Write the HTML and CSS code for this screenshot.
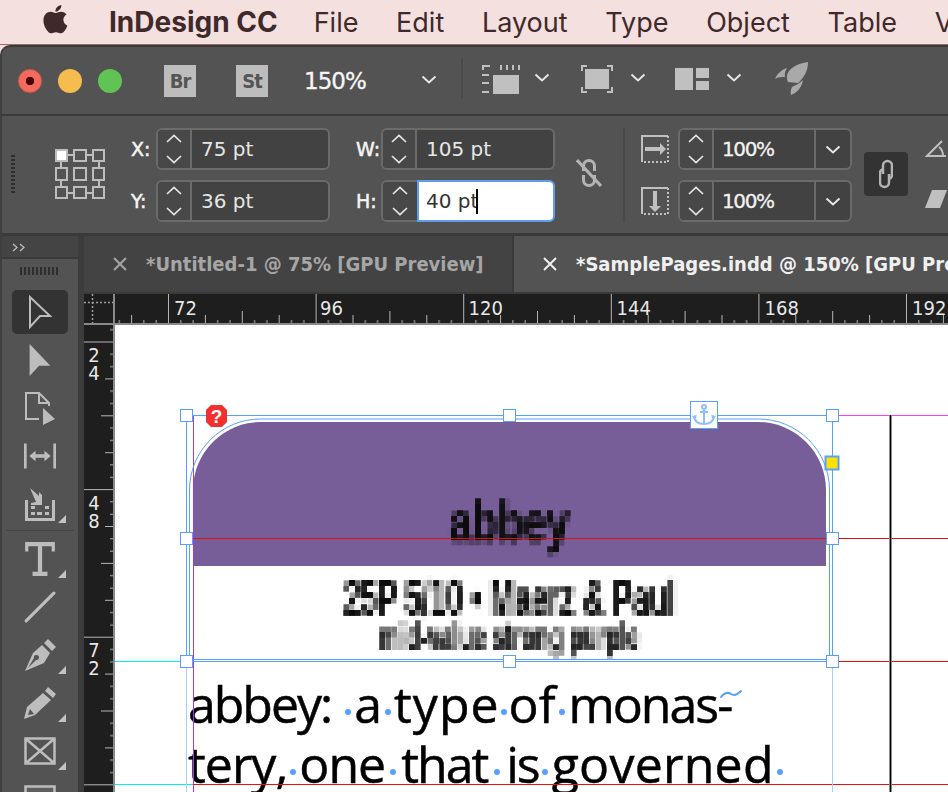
FILE: index.html
```html
<!DOCTYPE html>
<html lang="en">
<head>
<meta charset="utf-8">
<title>InDesign CC</title>
<link rel="stylesheet" href="styles.css">
</head>
<body>
<svg class="defs" aria-hidden="true">
  <defs>
    <filter id="pix" x="0" y="0" width="100%" height="100%" color-interpolation-filters="sRGB">
      <feGaussianBlur in="SourceGraphic" stdDeviation="0.9" result="soft"/>
      <feFlood x="2" y="2" width="2" height="2" flood-color="#000"/>
      <feComposite width="6" height="6"/>
      <feTile result="grid"/>
      <feComposite in="soft" in2="grid" operator="in"/>
      <feMorphology operator="dilate" radius="2"/>
    </filter>
    <symbol id="chev" viewBox="0 0 16 9"><path d="M1.5 1.5 8 7.5l6.5-6" fill="none" stroke="currentColor" stroke-width="2"/></symbol>
    <symbol id="spin" viewBox="0 0 16 30"><path d="M1 8 8 1.5 15 8M1 22l7 6.5 7-6.500" fill="none" stroke="currentColor" stroke-width="1.7"/></symbol>
    <symbol id="corner" viewBox="0 0 8 8"><path d="M8 0v8H0z" fill="#c4c4c4"/></symbol>
    <symbol id="closex" viewBox="0 0 14 14"><path d="M1 1l12 12M13 1 1 13" fill="none" stroke="currentColor" stroke-width="2"/></symbol>
  </defs>
</svg>

<div class="menubar">
  <svg class="apple" viewBox="3.5 3 16.5 18.5"><path d="M17.05 20.28c-.98.95-2.05.8-3.08.35-1.09-.46-2.09-.48-3.24 0-1.44.62-2.2.44-3.06-.35C2.79 15.25 3.51 7.59 9.05 7.31c1.35.07 2.29.74 3.08.8 1.18-.24 2.31-.93 3.57-.84 1.51.12 2.65.72 3.4 1.8-3.12 1.87-2.38 5.98.48 7.13-.57 1.5-1.31 2.99-2.54 4.09zM12.03 7.25c-.15-2.23 1.66-4.07 3.74-4.25.29 2.58-2.34 4.5-3.74 4.25z"/></svg>
  <span class="menu-app">InDesign CC</span>
  <span class="menu-item">File</span>
  <span class="menu-item">Edit</span>
  <span class="menu-item">Layout</span>
  <span class="menu-item">Type</span>
  <span class="menu-item">Object</span>
  <span class="menu-item">Table</span>
  <span class="menu-item">View</span>
</div>

<div class="window">
  <div class="titlebar">
    <span class="light light-red"></span>
    <span class="light light-yellow"></span>
    <span class="light light-green"></span>
    <span class="appbadge badge-br">Br</span>
    <span class="appbadge badge-st">St</span>
    <span class="zoomval">150%</span>
    <svg class="chev chev-zoom"><use href="#chev"/></svg>
    <span class="tdiv"></span>
    <svg class="ticon icon-layout" viewBox="0 0 38 30"><path fill="#c0c0c0" d="M11 11h26v19H11z"/><path fill="none" stroke="#c0c0c0" stroke-width="2" d="M0 2h8M1 1v5M19 1v5M25 1v5M31 1v5M37 1v5M0 11h7M0 19h7M0 28h7"/></svg>
    <svg class="chev chev-a"><use href="#chev"/></svg>
    <svg class="ticon icon-frame" viewBox="0 0 32 28"><path fill="#c0c0c0" d="M4 4h24v20H4z"/><path fill="none" stroke="#c0c0c0" stroke-width="2" d="M1 6V1h5M26 1h5v5M31 22v5h-5M6 27H1v-5"/></svg>
    <svg class="chev chev-b"><use href="#chev"/></svg>
    <svg class="ticon icon-arrange" viewBox="0 0 34 22"><path fill="#c0c0c0" d="M0 0h18v22H0zM21 0h13v10H21zM21 13h13v9H21z"/></svg>
    <svg class="chev chev-c"><use href="#chev"/></svg>
    <svg class="ticon icon-rocket" viewBox="0 0 34 34"><path fill="#a9a9a9" d="M33 0C25 1 18 4 14 9c-2 3-3 7-1 11l10 1c7-6 10-13 10-21zM12 6C6 8 2 12 0 17c3-2 6-2 10-2-.5-3 0-6 2-9zM28 18c-3 3-7 5-11 7-1.500 3-1.500 6-1 8 6-2 11-8 12-15z"/></svg>
  </div>

  <div class="controlbar">
    <span class="gripper"></span>
    <svg class="refgrid" viewBox="0 0 50 50">
      <path fill="none" stroke="#bdbdbd" stroke-width="2" d="M13 6h5M32 6h5M13 44h5M32 44h5M6 13v5M44 13v5M6 32v5M44 32v5"/>
      <path fill="none" stroke="#bdbdbd" stroke-width="2" d="M19 1h12v11H19zM38 1h11v11H38zM1 19h11v12H1zM19 19h12v12H19zM38 19h11v12H38zM1 38h11v11H1zM19 38h12v11H19zM38 38h11v11H38z"/>
      <path fill="#fff" stroke="#bdbdbd" stroke-width="2" d="M1 1h11v11H1z"/>
    </svg>
    <div class="xy xy-pos">
      <span class="flabel">X:</span>
      <div class="field"><span class="spinner"><svg class="spin"><use href="#spin"/></svg></span><span class="fval">75 pt</span></div>
      <span class="flabel">Y:</span>
      <div class="field"><span class="spinner"><svg class="spin"><use href="#spin"/></svg></span><span class="fval">36 pt</span></div>
    </div>
    <div class="xy xy-size">
      <span class="flabel">W:</span>
      <div class="field"><span class="spinner"><svg class="spin"><use href="#spin"/></svg></span><span class="fval">105 pt</span></div>
      <span class="flabel">H:</span>
      <div class="field field-focus"><span class="spinner"><svg class="spin"><use href="#spin"/></svg></span><span class="focusbox"><span class="fval">40 pt</span><span class="caret"></span></span></div>
    </div>
    <svg class="unlink" viewBox="0 0 26 30"><path fill="none" stroke="#b4b4b4" stroke-width="3" d="M7.500 13V8a5.500 5.500 0 0 1 11 0v5M18.500 17v5a5.500 5.500 0 0 1-11 0v-5"/><path stroke="#b4b4b4" stroke-width="3" d="M1 2l24 26"/></svg>
    <span class="cdiv"></span>
    <div class="scale">
      <svg class="sicon" viewBox="0 0 28 28"><path fill="none" stroke="#c0c0c0" stroke-width="2" d="M1 27V1h26"/><path fill="none" stroke="#c0c0c0" stroke-width="2" stroke-dasharray="2 2" d="M27 1v26H1"/><path fill="#c0c0c0" d="M4 12h15V8l6 6-6 6v-4H4z"/></svg>
      <div class="field field-scale"><span class="spinner"><svg class="spin"><use href="#spin"/></svg></span><span class="fval fval-pct">100%</span><span class="dropbtn"><svg class="chev"><use href="#chev"/></svg></span></div>
      <svg class="sicon" viewBox="0 0 28 28"><path fill="none" stroke="#c0c0c0" stroke-width="2" d="M1 27V1h26"/><path fill="none" stroke="#c0c0c0" stroke-width="2" stroke-dasharray="2 2" d="M27 1v26H1"/><path fill="#c0c0c0" d="M12 4h4v15h4l-6 6-6-6h4z"/></svg>
      <div class="field field-scale"><span class="spinner"><svg class="spin"><use href="#spin"/></svg></span><span class="fval fval-pct">100%</span><span class="dropbtn"><svg class="chev"><use href="#chev"/></svg></span></div>
    </div>
    <span class="linkbtn"><svg viewBox="0 0 14 30"><path fill="none" stroke="#b4b4b4" stroke-width="2.500" d="M4 15V6.500a4.500 4.500 0 0 1 9 0V16a4 4 0 0 1-4 4M10 15v8.500a4.500 4.500 0 0 1-9 0V14a4 4 0 0 1 4-4"/></svg></span>
    <div class="shear">
      <svg viewBox="0 0 22 18"><path fill="none" stroke="#c0c0c0" stroke-width="2" d="M21 17H2L17 2M14 8c3 2 4 5 4 9"/></svg>
      <svg viewBox="0 0 22 18"><path fill="#c0c0c0" d="M7 0h15l-7 18H0z"/></svg>
    </div>
  </div>

  <div class="workspace">
    <aside class="toolbar">
      <div class="tb-head"><svg viewBox="0 0 14 9"><path fill="none" stroke="#bdbdbd" stroke-width="1.3" d="M1 1l4 3.5L1 8M8 1l4 3.5L8 8"/></svg></div>
      <div class="tb-grip"></div>
      <div class="tool tool-active"><span class="tool-hl"><svg viewBox="0 0 26 36"><path fill="none" stroke="#bdbdbd" stroke-width="2" d="M3 3v30l10-11h10z"/></svg></span></div>
      <div class="tool"><svg viewBox="0 0 26 36"><path fill="#bdbdbd" d="M2 1v34l10-11h12z"/></svg></div>
      <div class="tool"><svg viewBox="0 0 32 34"><path fill="none" stroke="#bdbdbd" stroke-width="2" d="M15 28H2V2h13l10 10v3M15 2v10h10"/><path fill="#bdbdbd" d="M19 17l12 11-12 6z"/></svg></div>
      <div class="tool"><svg viewBox="0 0 36 28"><path fill="#bdbdbd" d="M0 0h3v28H0zM33 0h3v28h-3zM6 14l7-6v4h10V8l7 6-7 6v-4H13v4z"/></svg></div>
      <div class="tool has-corner"><svg viewBox="0 0 30 34"><path fill="#bdbdbd" d="M5 1l9 8V5l3 3v10H6v-2l5-1z"/><path fill="none" stroke="#bdbdbd" stroke-width="3" d="M1.500 13v19.500h27V13"/><path fill="#bdbdbd" d="M6 19h4v3H6zM12 25h5v3h-5zM6 25h4v3H6zM20 25h4v3h-4zM20 19h4v3h-4z"/></svg><svg class="corner"><use href="#corner"/></svg></div>
      <div class="tb-sep"></div>
      <div class="tool has-corner"><svg viewBox="0 0 28 32"><path fill="#bdbdbd" d="M0 0h28v9h-3V4H16v24h5v4H7v-4h5V4H3v5H0z"/></svg><svg class="corner"><use href="#corner"/></svg></div>
      <div class="tool"><svg viewBox="0 0 30 30"><path stroke="#bdbdbd" stroke-width="3" stroke-linecap="round" d="M2 28 28 2"/></svg></div>
      <div class="tool has-corner"><svg viewBox="0 0 32 32"><path fill="#bdbdbd" d="M24 0l8 8-4 4-8-8zM18 6l8 8-6 10L1 32l8-18zM4 29l8-8a2.500 2.500 0 1 0-2-2z"/></svg><svg class="corner"><use href="#corner"/></svg></div>
      <div class="tool has-corner"><svg viewBox="0 0 32 32"><path fill="#bdbdbd" d="M24 0l8 7-3 4-8-7zM19 6l8 7-16 15-11 4 3-12zM4 28l6-1-4-5z"/></svg><svg class="corner"><use href="#corner"/></svg></div>
      <div class="tool has-corner"><svg viewBox="0 0 32 28"><path fill="none" stroke="#bdbdbd" stroke-width="2.500" d="M1.500 1.500h29v25h-29zM1.500 1.500l29 25M30.500 1.500l-29 25"/></svg><svg class="corner"><use href="#corner"/></svg></div>
      <div class="tool"><svg viewBox="0 0 32 28"><path fill="#5f5f5f" stroke="#bdbdbd" stroke-width="2.500" d="M1.500 1.500h29v25h-29z"/></svg></div>
    </aside>

    <div class="docarea">
      <div class="tabs">
        <div class="tab tab-idle"><svg class="tabx"><use href="#closex"/></svg><span>*Untitled-1 @ 75% [GPU Preview]</span></div>
        <div class="tab tab-active"><svg class="tabx"><use href="#closex"/></svg><span>*SamplePages.indd @ 150% [GPU Preview]</span></div>
      </div>
      <div class="rulerrow">
        <svg class="corner-box" viewBox="0 0 29 29"><path fill="none" stroke="#a0a0a0" stroke-width="1.500" stroke-dasharray="2 2" d="M8.500 0v29M0 8.500h29"/></svg>
        <svg class="hruler" viewBox="115 0 833 29">
          <defs>
            <pattern id="hticks" x="168" y="0" width="147.6" height="29" patternUnits="userSpaceOnUse">
              <path stroke="#b5b5b5" fill="none" d="M.5 0v29M12.800 26v3M25.100 26v3M37.400 21v8M49.700 26v3M62 26v3M74.300 17v12M86.600 26v3M98.900 26v3M111.200 21v8M123.500 26v3M135.800 26v3"/>
            </pattern>
          </defs>
          <rect x="115" width="833" height="29" fill="url(#hticks)"/>
          <g class="rtext">
            <text x="174" y="20.500">72</text><text x="320" y="20.500">96</text><text x="468.500" y="20.500">120</text>
            <text x="616.500" y="20.500">144</text><text x="764.500" y="20.500">168</text><text x="912" y="20.500">192</text>
          </g>
        </svg>
      </div>
      <div class="pagerow">
        <svg class="vruler" viewBox="0 325 29 467">
          <defs>
            <pattern id="vticks" x="0" y="341.500" width="29" height="147.6" patternUnits="userSpaceOnUse">
              <path stroke="#b5b5b5" fill="none" d="M0 .5h29M26 12.800h3M26 25.100h3M21 37.400h8M26 49.700h3M26 62h3M17 74.300h12M26 86.600h3M26 98.900h3M21 111.200h8M26 123.500h3M26 135.800h3"/>
            </pattern>
          </defs>
          <rect y="325" width="29" height="467" fill="url(#vticks)"/>
          <g class="rtext rtext-v">
            <text x="10" y="362">2</text><text x="10" y="380">4</text>
            <text x="10" y="510">4</text><text x="10" y="528">8</text>
            <text x="10" y="657">7</text><text x="10" y="675">2</text>
          </g>
        </svg>
        <div class="canvas">
          <div class="swatch">
            <div class="swatch-head"><div class="px-name"><span>abbey</span></div></div>
            <div class="px-l1"><span>25P 5/10 • Maerz &amp; Paul</span></div>
            <div class="px-l2"><span>mid-value strong purple</span></div>
          </div>
          <div class="bodytext">
            <div class="bline"><span class="ls-2">abbey:</span><i class="sp g23"></i><span>a</span><i class="sp g12"></i><span class="ls1">type</span><i class="sp g9"></i><span>of</span><i class="sp g13"></i><span class="ls-2">monas-</span></div>
            <div class="bline"><span class="ls-1">tery,</span><i class="sp g12"></i><span class="ls-1">one</span><i class="sp g16"></i><span class="ls-2">that</span><i class="sp g19"></i><span class="ls-2">is</span><i class="sp g13"></i><span class="ls-f">governed</span><i class="sp g12"></i></div>
          </div>
          <svg class="overlay" viewBox="115 325 833 467">
            <g fill="none">
              <path stroke="#00f0f0" d="M115 661.500h71M115 784.500h78"/>
              <path stroke="#ff3df0" d="M838 415.500h110"/>
              <path stroke="#9b3fe0" d="M193.500 415v377"/>
              <path stroke="#e01010" stroke-width="1" d="M193 538.500h755"/>
              <path stroke="#ee1010" d="M838 661.500h110M193 784.500h755"/>
              <path stroke="#8c8c8c" stroke-width="3" d="M890.500 415v377"/>
              <path stroke="#000" d="M890.500 415v377"/>
              <path stroke="#a8cdfb" d="M832.500 667v125M186.500 667v125"/>
              <path stroke="#57a0ff" d="M186.500 415v250M832.500 415v246M187 415.500h645M187 661.500h645"/>
              <path stroke="#57a0ff" d="M189.500 658V490a71 71 0 0 1 71-71h498a71 71 0 0 1 71 71v168M190 659.500h639"/>
              <path stroke="#57a0ff" stroke-width="2" stroke-linecap="round" d="M721 697c4-5 7-5 10-3 3 2 6 1 10-3"/>
            </g>
            <g class="handles">
              <rect x="180.500" y="409.500" width="12" height="12"/><rect x="503.500" y="409.500" width="12" height="12"/><rect x="826.500" y="409.500" width="12" height="12"/>
              <rect x="180.500" y="532.500" width="12" height="12"/><rect x="826.500" y="532.500" width="12" height="12"/>
              <rect x="180.500" y="655.500" width="12" height="12"/><rect x="503.500" y="655.500" width="12" height="12"/><rect x="826.500" y="655.500" width="12" height="12"/>
            </g>
            <rect x="825.500" y="456.500" width="13" height="13" fill="#ffe100" stroke="#57a0ff" stroke-width="2"/>
            <rect x="690.500" y="401.500" width="27" height="27" fill="#fff" stroke="#57a0ff"/>
            <g fill="none" stroke="#8fc0fb" stroke-width="2">
              <circle cx="704" cy="407" r="2"/>
              <path d="M704 409v15M700 412h8M694 417c1 5 5 7 10 7s9-2 10-7" />
            </g>
            <path fill="#8fc0fb" d="M692 416l5-1-2 5zM716 416l-5-1 2 5z"/>
            <g>
              <path fill="#f23030" d="M211 405h11l5 5v12l-5 5h-11l-5-5v-12z"/>
              <text class="warn" x="216.500" y="423">?</text>
            </g>
          </svg>
        </div>
      </div>
    </div>
  </div>
</div>
</body>
</html>
```

FILE: styles.css
```css
* { box-sizing: border-box; }
html, body { margin: 0; padding: 0; }
body {
  width: 948px;
  height: 792px;
  overflow: hidden;
  background: #f4e0df;
  font-family: "DejaVu Sans", sans-serif;
  display: flex;
  flex-direction: column;
}
.defs { position: absolute; width: 0; height: 0; }

/* menu bar */
.menubar {
  height: 45px;
  flex: none;
  display: flex;
  align-items: center;
  background: #f4e0df;
  border-bottom: 1px solid #9a6a68;
  color: #40292b;
  font-family: "Inter", "Liberation Sans", sans-serif;
  font-size: 27px;
  white-space: nowrap;
  padding-left: 42px;
}
.apple { width: 26px; height: 31px; fill: #40292b; margin-right: 41px; margin-top: -6px; flex: none; }
.menu-app { font-weight: 700; font-size: 28px; margin-right: 36px; }
.menu-item { margin-right: 37.7px; }

/* window */
.window {
  flex: 1;
  min-height: 0;
  display: flex;
  flex-direction: column;
  background: #535353;
  border-top: 2px solid #3a3a3a;
  border-left: 2px solid #3f3f3f;
  border-top-left-radius: 10px;
  overflow: hidden;
}
.titlebar {
  height: 69px;
  flex: none;
  display: flex;
  align-items: center;
  padding-left: 16px;
  border-bottom: 2px solid #3a3a3a;
}
.light { width: 24px; height: 24px; border-radius: 50%; margin-right: 16px; flex: none; }
.light-red { background: radial-gradient(circle, #4a0404 0 4px, #f26b5e 4.500px); border: 1px solid #d8534a; }
.light-yellow { background: #f6bc4e; }
.light-green { background: #5fc454; margin-right: 42px; }
.appbadge {
  width: 32px; height: 32px; flex: none;
  background: #bdbdbd; color: #555;
  font-size: 20px; font-weight: 700; letter-spacing: -1px;
  font-family: "DejaVu Sans Condensed", "DejaVu Sans", sans-serif;
  display: flex; align-items: center; justify-content: center;
}
.badge-br { margin-right: 40px; }
.badge-st { margin-right: 36px; }
.zoomval { color: #f6f6f6; font-size: 23px; letter-spacing: -1px; -webkit-text-stroke: .3px #f6f6f6; width: 117px; flex: none; }
.chev { width: 16px; height: 9px; color: #e6e6e6; display: block; flex: none; }
.chev-zoom { margin-right: 24px; margin-top: -2px; }
.tdiv { width: 2px; height: 40px; background: #4a4a4a; margin-right: 19px; margin-top: -6px; flex: none; }
.ticon { flex: none; display: block; margin-top: -4px; }
.icon-layout { width: 38px; height: 30px; margin-right: 14px; }
.chev-a { margin-right: 31px; margin-top: -6px; }
.chev-b { margin-right: 29px; margin-top: -6px; }
.chev-c { margin-right: 33px; margin-top: -6px; }
.icon-frame { width: 32px; height: 28px; margin-right: 17px; }
.icon-arrange { width: 34px; height: 22px; margin-right: 17px; }
.icon-rocket { width: 34px; height: 34px; }

/* control panel */
.controlbar {
  height: 120px;
  flex: none;
  display: flex;
  align-items: flex-start;
  padding: 12px 0 0 9px;
  border-bottom: 3px solid #3a3a3a;
  white-space: nowrap;
}
.gripper {
  width: 4px; height: 40px; flex: none;
  margin: 27px 40px 0 0;
  background: repeating-linear-gradient(#2e2e2e 0 2px, transparent 2px 4px);
}
.refgrid { width: 50px; height: 50px; flex: none; margin: 21px 26px 0 0; }
.xy { display: grid; grid-template-columns: 25px 174px; row-gap: 10px; align-items: center; flex: none; }
.xy-pos { margin-right: 26px; }
.flabel { color: #f4f4f4; font-size: 19px; -webkit-text-stroke: .5px #f4f4f4; }
.field {
  height: 42px;
  display: flex;
  align-items: center;
  border: 2px solid #6b6b6b;
  border-radius: 6px;
  background: #424242;
  color: #e6e6e6;
  font-size: 20px;
}
.spinner {
  width: 34px; height: 100%; flex: none;
  background: #484848;
  border-right: 2px solid #6b6b6b;
  display: flex; align-items: center; justify-content: center;
  border-radius: 4px 0 0 4px;
}
.spin { width: 16px; height: 30px; color: #e6e6e6; display: block; }
.fval { padding-left: 9px; }
.field-focus .spinner { border-right: 0; }
.focusbox {
  flex: 1;
  align-self: stretch;
  margin: -2px -2px -2px 0;
  display: flex;
  align-items: center;
  background: #fff;
  border: 2px solid #5f9fe8;
  border-radius: 0 6px 6px 0;
  color: #333;
}
.focusbox .fval { padding-left: 7px; }
.caret { width: 2px; height: 25px; background: #000; margin-left: -2px; flex: none; }
.unlink { width: 26px; height: 30px; flex: none; margin: 30px 21px 0 21px; }
.cdiv { width: 2px; height: 94px; background: #4a4a4a; flex: none; }
.scale {
  display: grid;
  grid-template-columns: 28px 174px;
  column-gap: 9px;
  row-gap: 10px;
  align-items: center;
  margin-left: 16px;
  flex: none;
}
.sicon { width: 28px; height: 28px; display: block; }
.field-scale .fval { flex: 1; letter-spacing: -1.4px; padding-left: 8px; color: #f2f2f2; -webkit-text-stroke: .3px #f2f2f2; }
.dropbtn {
  width: 36px; height: 100%; flex: none;
  border-left: 2px solid #6b6b6b;
  display: flex; align-items: center; justify-content: center;
}
.linkbtn {
  width: 44px; height: 44px; flex: none;
  margin: 24px 0 0 12px;
  background: #333;
  border-radius: 4px;
  display: flex; align-items: center; justify-content: center;
}
.linkbtn svg { width: 14px; height: 30px; }
.shear { flex: none; margin: 11px 0 0 17px; display: flex; flex-direction: column; gap: 33px; }
.shear svg { width: 22px; height: 18px; display: block; }

/* workspace */
.workspace { flex: 1; min-height: 0; display: flex; background: #3c3c3c; }
.toolbar {
  width: 76px;
  flex: none;
  margin-right: 6px;
  background: #535353;
  display: flex;
  flex-direction: column;
  align-items: stretch;
}
.tb-head { height: 23px; flex: none; background: #444; border-bottom: 2px solid #3a3a3a; padding: 7px 0 0 10px; }
.tb-head svg { width: 14px; height: 9px; display: block; }
.tb-grip {
  height: 8px; margin: 8px 19px 0 18px; flex: none;
  background: repeating-linear-gradient(90deg, #2e2e2e 0 2px, transparent 2px 4px);
}
.tool { height: 48px; flex: none; display: flex; align-items: center; justify-content: center; position: relative; }
.tb-grip + .tool { margin-top: 13px; }
.tool > svg:first-child { width: 32px; height: 34px; }
.tool-hl {
  width: 56px; height: 44px;
  background: #333;
  border-radius: 5px;
  display: flex; align-items: center; justify-content: center;
}
.tool-hl svg { width: 26px; height: 36px; }
.corner { position: absolute; right: 12px; bottom: 5px; width: 8px; height: 8px; }
.tb-sep { height: 7px; flex: none; margin: 0 4px; position: relative; }
.tb-sep::after { content: ""; position: absolute; left: 0; right: 0; top: 2px; height: 1px; background: #454545; }

/* tabs & rulers */
.docarea { flex: 1; min-width: 0; display: flex; flex-direction: column; }
.tabs { height: 58px; flex: none; display: flex; background: #3a3a3a; border-bottom: 2px solid #3a3a3a; }
.tab {
  display: flex; align-items: center;
  font-family: "DejaVu Sans Condensed", "DejaVu Sans", sans-serif;
  font-stretch: condensed;
  font-size: 20px; font-weight: 700;
  white-space: nowrap;
  height: 100%;
  overflow: hidden;
}
.tabx { width: 14px; height: 14px; margin: 0 19px 0 29px; flex: none; }
.tab-idle { width: 428px; background: #434343; color: #a6a6a6; margin-right: 2px; }
.tab-active { flex: 1; background: #535353; color: #f0f0f0; min-width: 0; }
.rulerrow { height: 31px; flex: none; display: flex; background: #1e1e1e; border-bottom: 2px solid #8a8a8a; }
.corner-box { width: 31px; height: 29px; flex: none; border-right: 2px solid #8a8a8a; }
.hruler { width: 833px; height: 29px; flex: none; }
.rtext text { fill: #e8e8e8; font-family: "DejaVu Sans Condensed", "DejaVu Sans", sans-serif; font-stretch: condensed; font-size: 20px; }
.rtext-v text { text-anchor: middle; }
.pagerow { flex: 1; min-height: 0; display: flex; }
.vruler { width: 31px; height: 467px; flex: none; background: #1e1e1e; border-right: 2px solid #8a8a8a; }

/* page */
.canvas { flex: 1; min-width: 0; position: relative; background: #fff; overflow: hidden; }
.swatch { position: absolute; left: 78px; top: 97px; width: 633px; }
.swatch-head {
  height: 144px;
  background: #775e98;
  border-radius: 68px 68px 0 0;
  padding-top: 64px;
}
.px-name, .px-l1, .px-l2 {
  font-family: "Liberation Sans", sans-serif;
  font-weight: 700;
  color: #0c0c0c;
  filter: url(#pix);
  white-space: nowrap;
  text-align: center;
}
.px-name span, .px-l1 span, .px-l2 span { display: inline-block; }
.px-name { font-size: 57px; line-height: 72px; height: 72px; }
.px-name span { transform: scaleX(.73); }
.px-l1 { font-size: 50px; line-height: 60px; height: 60px; margin-top: 2px; }
.px-l1 span { transform: scaleX(.597); }
.px-l2 { font-size: 38px; line-height: 46px; height: 46px; margin-top: -14px; }
.px-l2 span { transform: scaleX(.6); }
.bodytext {
  position: absolute; left: 73px; top: 349px;
  font-family: "Open Sans", sans-serif;
  font-size: 50px;
  line-height: 60px;
  color: #000;
  -webkit-text-stroke: .5px #000;
  white-space: nowrap;
}
.bline { display: flex; }
.ls-2 { letter-spacing: -2px; }
.ls-1 { letter-spacing: -1px; }
.ls1 { letter-spacing: 1px; }
.ls-f { letter-spacing: .25px; }
.sp { position: relative; display: block; flex: none; }
.g9 { width: 9px; }
.g12 { width: 12px; }
.g13 { width: 13px; }
.g16 { width: 16px; }
.g19 { width: 19px; }
.g23 { width: 23px; }
.sp::after {
  content: ""; position: absolute; left: calc(50% - 3px); top: 35px;
  width: 6px; height: 6px; border-radius: 50%; background: #57a0ff;
}
.g23::after { left: 14px; }
.overlay { position: absolute; left: 0; top: 0; width: 833px; height: 467px; }
.handles rect { fill: #fff; stroke: #57a0ff; }
.warn { fill: #fff; font: 700 19px "Liberation Sans", sans-serif; text-anchor: middle; }
```
